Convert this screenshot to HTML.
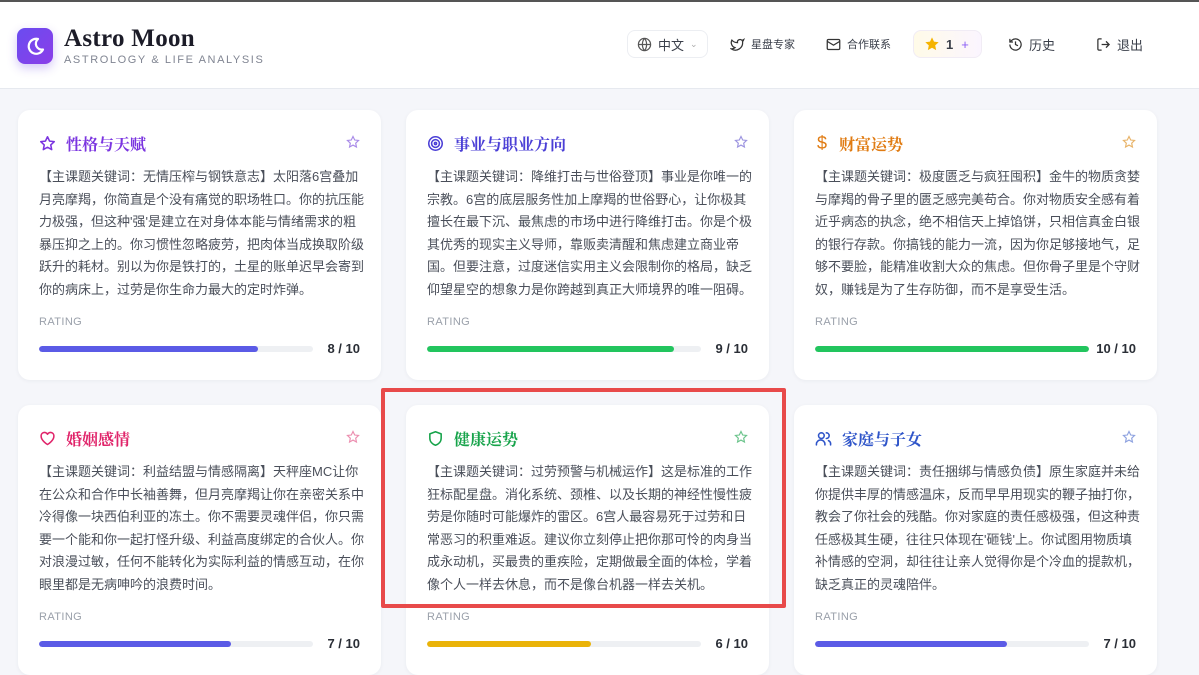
<!DOCTYPE html>
<html><head><meta charset="utf-8">
<style>
*{box-sizing:border-box;margin:0;padding:0}
body{width:1199px;height:670px;overflow:hidden;background:#f5f6fa;font-family:"Liberation Sans","Noto Sans CJK SC",sans-serif;position:relative}
.top{position:absolute;left:0;top:0;width:1199px;height:2px;background:#555}
.hdr{position:absolute;left:0;top:2px;width:1199px;height:87px;background:#fff;border-bottom:1px solid #e6e9ef}
.logo{position:absolute;left:17px;top:26px;width:36px;height:36px;border-radius:8px;background:linear-gradient(135deg,#6a4cf0,#8b3ee8);box-shadow:0 4px 10px rgba(110,70,230,.3)}
.brand{position:absolute;left:64px;top:23px;font-family:"Liberation Serif","Noto Serif CJK SC",serif;font-size:25px;font-weight:700;color:#1c1c28;letter-spacing:.3px}
.sub{position:absolute;left:64px;top:52px;font-size:11px;color:#808592;letter-spacing:1.6px}
.nav{position:absolute;top:30px;height:28px;display:flex;align-items:center;font-size:13px;color:#3a3f4a}
.nav svg{margin-right:6px}
.card{position:absolute;width:363px;height:270px;background:#fff;border-radius:12px;box-shadow:0 1px 4px rgba(20,30,60,.05)}
.ttl{position:absolute;left:21px;top:22px;height:22px;display:flex;align-items:center;font-family:"Noto Serif CJK SC",serif;font-weight:700;font-size:16px}
.ttl svg{margin-right:10px}
.fav{position:absolute;right:21px;top:25px}
.txt{position:absolute;left:21px;top:56px;font-size:13px;line-height:22.5px;color:#4a4f5a;white-space:nowrap}
.rt{position:absolute;left:21px;top:206px;font-size:11px;color:#9aa0aa;letter-spacing:.4px}
.bar{position:absolute;left:21px;top:236px;width:274px;height:6px;border-radius:3px;background:#eef0f3;overflow:hidden}
.bar i{display:block;height:6px;border-radius:3px}
.sc{position:absolute;right:21px;top:231px;font-size:13px;font-weight:700;color:#2a2e36}
.red{position:absolute;left:381px;top:388px;width:405px;height:220px;border:4px solid #e84a4a;border-radius:2px}
</style></head><body>
<div class="top"></div>
<div class="hdr">
<div class="logo"><svg width="36" height="36" viewBox="0 0 36 36"><path d="M21 11a7.5 7.5 0 1 0 5 10.5A6 6 0 0 1 21 11z" fill="none" stroke="#fff" stroke-width="2.2" stroke-linejoin="round"/></svg></div>
<div class="brand">Astro Moon</div>
<div class="sub">ASTROLOGY &amp; LIFE ANALYSIS</div>
</div>
<div class="nav" style="left:627px;width:81px;border:1px solid #eceef2;border-radius:8px;padding-left:9px;background:#fff"><svg width="15" height="15" viewBox="0 0 16 16" fill="none" stroke="#555" stroke-width="1.3"><circle cx="8" cy="8" r="6.5"/><path d="M1.5 8h13M8 1.5c-3 3.5-3 9.5 0 13M8 1.5c3 3.5 3 9.5 0 13"/></svg>中文 <span style="color:#aaa;font-size:9px;margin-left:6px">⌄</span></div>
<div class="nav" style="left:730px;font-size:11px"><svg width="15" height="15" viewBox="0 0 24 24" fill="none" stroke="#333" stroke-width="2"><path d="M22 4s-.7 2.1-2 3.4c1.6 10-9.4 17.3-18 11.6 2.2.1 4.4-.6 6-2C3 15.5.5 9.6 3 5c2.2 2.6 5.6 4.1 9 4-.9-4.2 4-6.6 7-3.8 1.1 0 3-1.2 3-1.2z"/></svg>星盘专家</div>
<div class="nav" style="left:826px;font-size:11px"><svg width="15" height="15" viewBox="0 0 24 24" fill="none" stroke="#333" stroke-width="2"><rect x="2" y="4" width="20" height="16" rx="2"/><path d="M2 7l10 6 10-6"/></svg>合作联系</div>
<div class="nav" style="left:913px;width:69px;border:1px solid #f1ecf5;border-radius:8px;background:linear-gradient(90deg,#fffbe8,#fbf5ff);padding-left:10px;font-weight:700"><svg width="16" height="16" viewBox="0 0 24 24"><path d="M12 2l3 6.5 7 .8-5.2 4.8 1.4 7L12 17.6 5.8 21.1l1.4-7L2 9.3l7-.8z" fill="#f5b301"/></svg>1 <span style="color:#8a5cf5;margin-left:8px;font-weight:400">+</span></div>
<div class="nav" style="left:1008px"><svg width="15" height="15" viewBox="0 0 24 24" fill="none" stroke="#333" stroke-width="2"><path d="M3 12a9 9 0 1 0 3-6.7L3 8"/><path d="M3 3v5h5M12 7v5l4 2"/></svg>历史</div>
<div class="nav" style="left:1096px"><svg width="15" height="15" viewBox="0 0 24 24" fill="none" stroke="#333" stroke-width="2"><path d="M9 21H5a2 2 0 0 1-2-2V5a2 2 0 0 1 2-2h4M16 17l5-5-5-5M21 12H9"/></svg>退出</div>

<div class="card" style="left:18px;top:110px">
<div class="ttl" style="color:#7b35e0"><svg width="17" height="17" viewBox="0 0 24 24" fill="none" stroke="#7b35e0" stroke-width="2.2" stroke-linejoin="round"><path d="M12 2.5l2.9 6.1 6.6.8-4.9 4.6 1.3 6.6L12 17.3l-5.9 3.3 1.3-6.6-4.9-4.6 6.6-.8z"/></svg>性格与天赋</div>
<svg class="fav" width="14" height="14" viewBox="0 0 24 24" fill="none" stroke="#a98be8" stroke-width="2"><path d="M12 2.5l2.9 6.1 6.6.8-4.9 4.6 1.3 6.6L12 17.3l-5.9 3.3 1.3-6.6-4.9-4.6 6.6-.8z"/></svg>
<div class="txt">【主课题关键词：无情压榨与钢铁意志】太阳落6宫叠加<br>月亮摩羯，你简直是个没有痛觉的职场牲口。你的抗压能<br>力极强，但这种'强'是建立在对身体本能与情绪需求的粗<br>暴压抑之上的。你习惯性忽略疲劳，把肉体当成换取阶级<br>跃升的耗材。别以为你是铁打的，土星的账单迟早会寄到<br>你的病床上，过劳是你生命力最大的定时炸弹。</div>
<div class="rt">RATING</div><div class="bar"><i style="width:80%;background:#5b5be6"></i></div><div class="sc">8 / 10</div>
</div>
<div class="card" style="left:406px;top:110px">
<div class="ttl" style="color:#4b3fd6"><svg width="17" height="17" viewBox="0 0 24 24" fill="none" stroke="#4b3fd6" stroke-width="2.2"><circle cx="12" cy="12" r="9.5"/><circle cx="12" cy="12" r="5.5"/><circle cx="12" cy="12" r="1.5"/></svg>事业与职业方向</div>
<svg class="fav" width="14" height="14" viewBox="0 0 24 24" fill="none" stroke="#9d95e0" stroke-width="2"><path d="M12 2.5l2.9 6.1 6.6.8-4.9 4.6 1.3 6.6L12 17.3l-5.9 3.3 1.3-6.6-4.9-4.6 6.6-.8z"/></svg>
<div class="txt">【主课题关键词：降维打击与世俗登顶】事业是你唯一的<br>宗教。6宫的底层服务性加上摩羯的世俗野心，让你极其<br>擅长在最下沉、最焦虑的市场中进行降维打击。你是个极<br>其优秀的现实主义导师，靠贩卖清醒和焦虑建立商业帝<br>国。但要注意，过度迷信实用主义会限制你的格局，缺乏<br>仰望星空的想象力是你跨越到真正大师境界的唯一阻碍。</div>
<div class="rt">RATING</div><div class="bar"><i style="width:90%;background:#22c55e"></i></div><div class="sc">9 / 10</div>
</div>
<div class="card" style="left:794px;top:110px">
<div class="ttl" style="color:#e07b12"><span style="font-family:'Liberation Sans';font-weight:400;font-size:18px;margin-right:12px;margin-left:2px">$</span>财富运势</div>
<svg class="fav" width="14" height="14" viewBox="0 0 24 24" fill="none" stroke="#e8b46a" stroke-width="2"><path d="M12 2.5l2.9 6.1 6.6.8-4.9 4.6 1.3 6.6L12 17.3l-5.9 3.3 1.3-6.6-4.9-4.6 6.6-.8z"/></svg>
<div class="txt">【主课题关键词：极度匮乏与疯狂囤积】金牛的物质贪婪<br>与摩羯的骨子里的匮乏感完美苟合。你对物质安全感有着<br>近乎病态的执念，绝不相信天上掉馅饼，只相信真金白银<br>的银行存款。你搞钱的能力一流，因为你足够接地气，足<br>够不要脸，能精准收割大众的焦虑。但你骨子里是个守财<br>奴，赚钱是为了生存防御，而不是享受生活。</div>
<div class="rt">RATING</div><div class="bar"><i style="width:100%;background:#22c55e"></i></div><div class="sc">10 / 10</div>
</div>

<div class="card" style="left:18px;top:405px">
<div class="ttl" style="color:#e0246a"><svg width="17" height="17" viewBox="0 0 24 24" fill="none" stroke="#e0246a" stroke-width="2.2" stroke-linejoin="round"><path d="M12 20.5S3 15 3 8.8A4.8 4.8 0 0 1 12 6a4.8 4.8 0 0 1 9 2.8C21 15 12 20.5 12 20.5z"/></svg>婚姻感情</div>
<svg class="fav" width="14" height="14" viewBox="0 0 24 24" fill="none" stroke="#ec8fb0" stroke-width="2"><path d="M12 2.5l2.9 6.1 6.6.8-4.9 4.6 1.3 6.6L12 17.3l-5.9 3.3 1.3-6.6-4.9-4.6 6.6-.8z"/></svg>
<div class="txt">【主课题关键词：利益结盟与情感隔离】天秤座MC让你<br>在公众和合作中长袖善舞，但月亮摩羯让你在亲密关系中<br>冷得像一块西伯利亚的冻土。你不需要灵魂伴侣，你只需<br>要一个能和你一起打怪升级、利益高度绑定的合伙人。你<br>对浪漫过敏，任何不能转化为实际利益的情感互动，在你<br>眼里都是无病呻吟的浪费时间。</div>
<div class="rt">RATING</div><div class="bar"><i style="width:70%;background:#5b5be6"></i></div><div class="sc">7 / 10</div>
</div>
<div class="card" style="left:406px;top:405px">
<div class="ttl" style="color:#16a34a"><svg width="17" height="17" viewBox="0 0 24 24" fill="none" stroke="#16a34a" stroke-width="2.2" stroke-linejoin="round"><path d="M12 2.5l8 3v6c0 5-3.5 8.5-8 10-4.5-1.5-8-5-8-10v-6z"/></svg>健康运势</div>
<svg class="fav" width="14" height="14" viewBox="0 0 24 24" fill="none" stroke="#6cc48c" stroke-width="2"><path d="M12 2.5l2.9 6.1 6.6.8-4.9 4.6 1.3 6.6L12 17.3l-5.9 3.3 1.3-6.6-4.9-4.6 6.6-.8z"/></svg>
<div class="txt">【主课题关键词：过劳预警与机械运作】这是标准的工作<br>狂标配星盘。消化系统、颈椎、以及长期的神经性慢性疲<br>劳是你随时可能爆炸的雷区。6宫人最容易死于过劳和日<br>常恶习的积重难返。建议你立刻停止把你那可怜的肉身当<br>成永动机，买最贵的重疾险，定期做最全面的体检，学着<br>像个人一样去休息，而不是像台机器一样去关机。</div>
<div class="rt">RATING</div><div class="bar"><i style="width:60%;background:#eab308"></i></div><div class="sc">6 / 10</div>
</div>
<div class="card" style="left:794px;top:405px">
<div class="ttl" style="color:#2f55c9"><svg width="17" height="17" viewBox="0 0 24 24" fill="none" stroke="#2f55c9" stroke-width="2.2" stroke-linecap="round"><circle cx="9" cy="8" r="4"/><path d="M2 21v-1a6 6 0 0 1 12 0v1M16 4a4 4 0 0 1 0 8M19 15a5 5 0 0 1 3 5v1"/></svg>家庭与子女</div>
<svg class="fav" width="14" height="14" viewBox="0 0 24 24" fill="none" stroke="#8fa3e0" stroke-width="2"><path d="M12 2.5l2.9 6.1 6.6.8-4.9 4.6 1.3 6.6L12 17.3l-5.9 3.3 1.3-6.6-4.9-4.6 6.6-.8z"/></svg>
<div class="txt">【主课题关键词：责任捆绑与情感负债】原生家庭并未给<br>你提供丰厚的情感温床，反而早早用现实的鞭子抽打你，<br>教会了你社会的残酷。你对家庭的责任感极强，但这种责<br>任感极其生硬，往往只体现在'砸钱'上。你试图用物质填<br>补情感的空洞，却往往让亲人觉得你是个冷血的提款机，<br>缺乏真正的灵魂陪伴。</div>
<div class="rt">RATING</div><div class="bar"><i style="width:70%;background:#5b5be6"></i></div><div class="sc">7 / 10</div>
</div>
<div class="red"></div>
</body></html>
